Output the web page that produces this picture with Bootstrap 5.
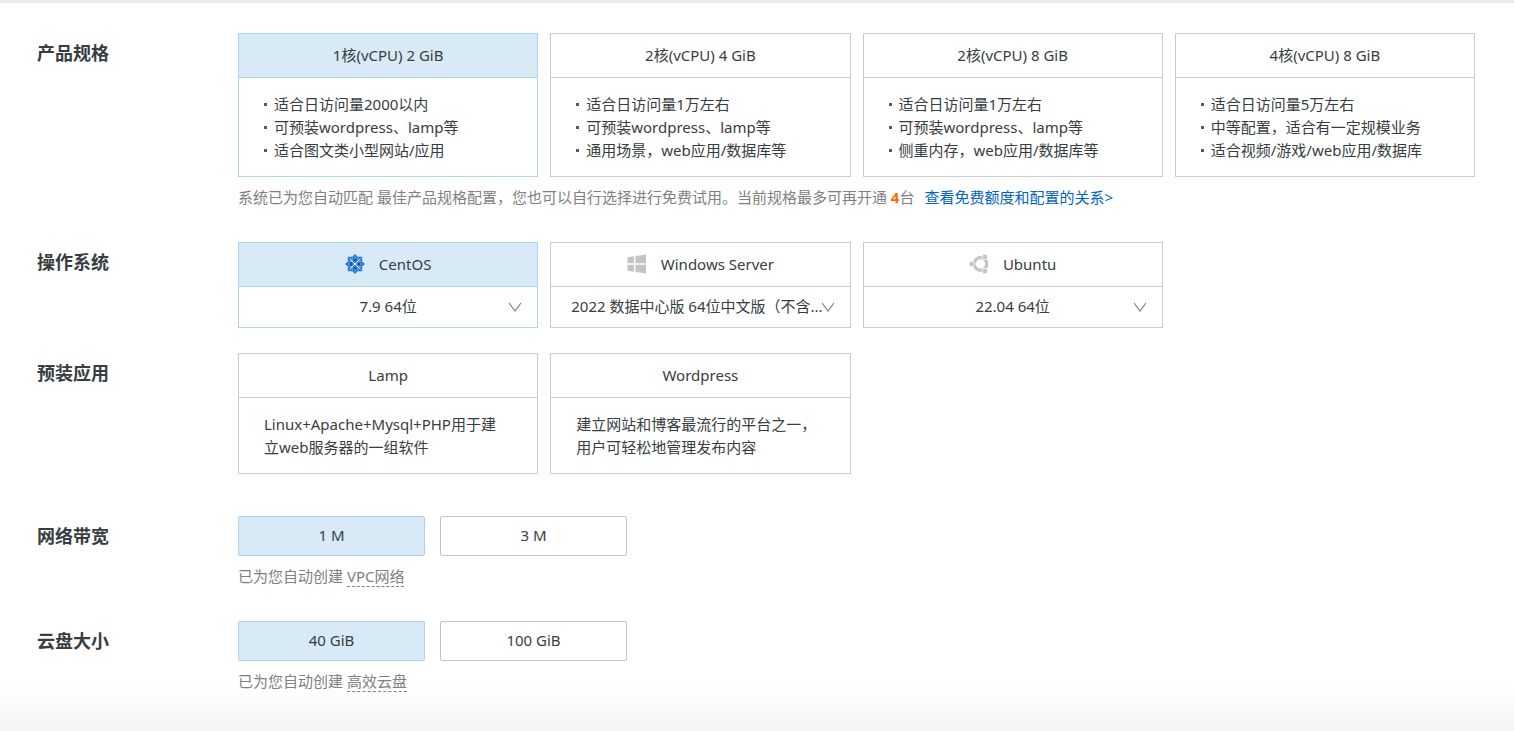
<!DOCTYPE html>
<html lang="zh-CN">
<head>
<meta charset="utf-8">
<meta name="viewport" content="width=device-width, initial-scale=1">
<title>免费试用配置</title>
<link href="https://cdn.jsdelivr.net/npm/bootstrap@5.3.0/dist/css/bootstrap.min.css" rel="stylesheet">
<style>
  body { font-family: "Noto Sans", "Noto Sans CJK SC", sans-serif; font-size: 15px; color: #373d41; min-height: 100vh; line-height: 24px;
    background: linear-gradient(to top, #f5f5f5, #fff 48px) no-repeat #fff; border-top: 3px solid #e9e9ee; }
  .config { padding: 30px 39px 24px 37px; }
  .field-label { flex: 0 0 201px; font-size: 18px; font-weight: 700; padding-top: 8px; margin: 0; line-height: 24px; }
  .options { display: grid; grid-template-columns: repeat(4, minmax(0, 1fr)); gap: 12px; }
  .option { border: 1px solid #ccc; background: #fff; }
  .option-head { height: 44px; border: 0; border-bottom: 1px solid #ccc; background: #fff; color: inherit; width: 100%; padding: 0 0 2px; gap: 14px; }
  .option-body { padding: 15px 30px 14px 25px; line-height: 23px; }
  .option.active, .option.active .option-head { border-color: #aed3ee; }
  .option.active .option-head { background: #d8eaf6; }
  .option-body li { display: flex; align-items: center; gap: 7px; white-space: nowrap; }
  .option-body li::before { content: ""; width: 3px; height: 3px; background: #55595d; }
  .version { appearance: none; width: 100%; height: 40px; border: 0; background: #fff; color: inherit; text-align: center; text-align-last: center; padding: 0 8px 2px; }
  .version-long { padding: 0 28px 2px 20px; }
  .arrow { position: absolute; right: 15px; top: 15px; pointer-events: none; }
  .size-btn { width: 187px; height: 40px; font-size: 15px; border: 1px solid #c0c4cc; border-radius: 2px; background: #fff; color: #373d41; padding: 0 0 2px; }
  .size-btn.active { background: #d8eaf6; border-color: #aed3ee; color: #373d41; }
  .hint { color: #808080; margin: 8px 0 0; }
  .hint a { color: #0064c8; text-decoration: none; margin-left: 10px; }
  .hint strong { color: #ff6a00; }
  .term { border-bottom: 1px dashed #808080; display: inline-block; line-height: 20px; }
  .gap-size { gap: 15px; }
  .mb-l { margin-bottom: 33px; } .mb-s { margin-bottom: 25px; } .mb-xl { margin-bottom: 42px; }
</style>
</head>
<body>
<main class="config">
  <section class="d-flex mb-l">
    <h2 class="field-label">产品规格</h2>
    <div class="flex-grow-1">
      <div class="options">
        <div class="option active"><button type="button" class="option-head">1核(vCPU) 2 GiB</button>
          <ul class="option-body list-unstyled mb-0"><li>适合日访问量2000以内</li><li>可预装wordpress、lamp等</li><li>适合图文类小型网站/应用</li></ul></div>
        <div class="option"><button type="button" class="option-head">2核(vCPU) 4 GiB</button>
          <ul class="option-body list-unstyled mb-0"><li>适合日访问量1万左右</li><li>可预装wordpress、lamp等</li><li>通用场景，web应用/数据库等</li></ul></div>
        <div class="option"><button type="button" class="option-head">2核(vCPU) 8 GiB</button>
          <ul class="option-body list-unstyled mb-0"><li>适合日访问量1万左右</li><li>可预装wordpress、lamp等</li><li>侧重内存，web应用/数据库等</li></ul></div>
        <div class="option"><button type="button" class="option-head">4核(vCPU) 8 GiB</button>
          <ul class="option-body list-unstyled mb-0"><li>适合日访问量5万左右</li><li>中等配置，适合有一定规模业务</li><li>适合视频/游戏/web应用/数据库</li></ul></div>
      </div>
      <p class="hint">系统已为您自动匹配 最佳产品规格配置，您也可以自行选择进行免费试用。当前规格最多可再开通 <strong>4</strong>台<a href="#">查看免费额度和配置的关系&gt;</a></p>
    </div>
  </section>

  <section class="d-flex mb-s">
    <h2 class="field-label">操作系统</h2>
    <div class="options flex-grow-1">
      <div class="option active">
        <button type="button" class="option-head d-flex align-items-center justify-content-center">
          <svg width="20" height="20" viewBox="0 0 20 20" aria-hidden="true">
            <path fill="#2a78cf" d="M10 0l2.600 2.700H17.200V7.400L20 10l-2.800 2.600v4.600h-4.600L10 20l-2.600-2.800H2.800v-4.600L0 10l2.800-2.600V2.700h4.600z"/>
            <path fill="none" stroke="#8fc0ec" stroke-width=".8" d="M10 2.500v15M2.500 10h15M7.200 3.500v4L3.500 7.200M12.800 3.500v4l3.700-.3M7.200 16.500v-4l-3.700.3M12.800 16.500v-4l3.700.3"/>
            <path fill="none" stroke="#d8eaf6" stroke-width="1" d="M4.500 4.500l11 11M15.500 4.500l-11 11"/>
            <path fill="#1557b0" d="M10 4l1.500 2L10 8 8.500 6zM10 12l1.500 2-1.500 2-1.500-2zM4 10l2-1.500L8 10l-2 1.500zM12 10l2-1.500 2 1.500-2 1.500z"/>
          </svg>
          <span>CentOS</span></button>
        <div class="position-relative"><select class="version" aria-label="CentOS 版本"><option>7.9 64位</option></select>
          <svg class="arrow" width="14" height="11" viewBox="0 0 14 11" fill="none" stroke="#808080" stroke-width="1.2"><path d="M1 1l6 8 6-8"/></svg></div>
      </div>
      <div class="option">
        <button type="button" class="option-head d-flex align-items-center justify-content-center">
          <svg width="20" height="20" viewBox="0 0 20 20" fill="#c4c4c6" aria-hidden="true"><path d="M.5 3.200l6.500-1v7H.5zM8.500 2L19 .5v8.700H8.500zM.5 10.800H7v7l-6.500-1zM8.500 10.800H19V19.500L8.500 18z"/></svg>
          <span>Windows Server</span></button>
        <div class="position-relative"><select class="version version-long" aria-label="Windows Server 版本"><option>2022 数据中心版 64位中文版（不含...</option></select>
          <svg class="arrow" width="14" height="11" viewBox="0 0 14 11" fill="none" stroke="#808080" stroke-width="1.2"><path d="M1 1l6 8 6-8"/></svg></div>
      </div>
      <div class="option">
        <button type="button" class="option-head d-flex align-items-center justify-content-center">
          <svg width="20" height="20" viewBox="0 0 20 20" aria-hidden="true"><circle cx="11.500" cy="10" r="6.300" fill="none" stroke="#c4c4c6" stroke-width="3.200"/><g fill="#c4c4c6" stroke="#fff" stroke-width=".8"><circle cx="2.800" cy="10" r="2.800"/><circle cx="15.800" cy="2.900" r="2.800"/><circle cx="15.800" cy="17.100" r="2.800"/></g></svg>
          <span>Ubuntu</span></button>
        <div class="position-relative"><select class="version" aria-label="Ubuntu 版本"><option>22.04 64位</option></select>
          <svg class="arrow" width="14" height="11" viewBox="0 0 14 11" fill="none" stroke="#808080" stroke-width="1.2"><path d="M1 1l6 8 6-8"/></svg></div>
      </div>
    </div>
  </section>

  <section class="d-flex mb-xl">
    <h2 class="field-label">预装应用</h2>
    <div class="options flex-grow-1">
      <div class="option"><button type="button" class="option-head">Lamp</button>
        <p class="option-body mb-0">Linux+Apache+Mysql+PHP用于建立web服务器的一组软件</p></div>
      <div class="option"><button type="button" class="option-head">Wordpress</button>
        <p class="option-body mb-0">建立网站和博客最流行的平台之一，用户可轻松地管理发布内容</p></div>
    </div>
  </section>

  <section class="d-flex mb-l">
    <h2 class="field-label">网络带宽</h2>
    <div>
      <div class="d-flex gap-size"><button type="button" class="btn size-btn active">1 M</button><button type="button" class="btn size-btn">3 M</button></div>
      <p class="hint">已为您自动创建 <span class="term">VPC网络</span></p>
    </div>
  </section>

  <section class="d-flex">
    <h2 class="field-label">云盘大小</h2>
    <div>
      <div class="d-flex gap-size"><button type="button" class="btn size-btn active">40 GiB</button><button type="button" class="btn size-btn">100 GiB</button></div>
      <p class="hint">已为您自动创建 <span class="term">高效云盘</span></p>
    </div>
  </section>
</main>
<script src="https://cdn.jsdelivr.net/npm/bootstrap@5.3.0/dist/js/bootstrap.bundle.min.js"></script>
</body>
</html>
